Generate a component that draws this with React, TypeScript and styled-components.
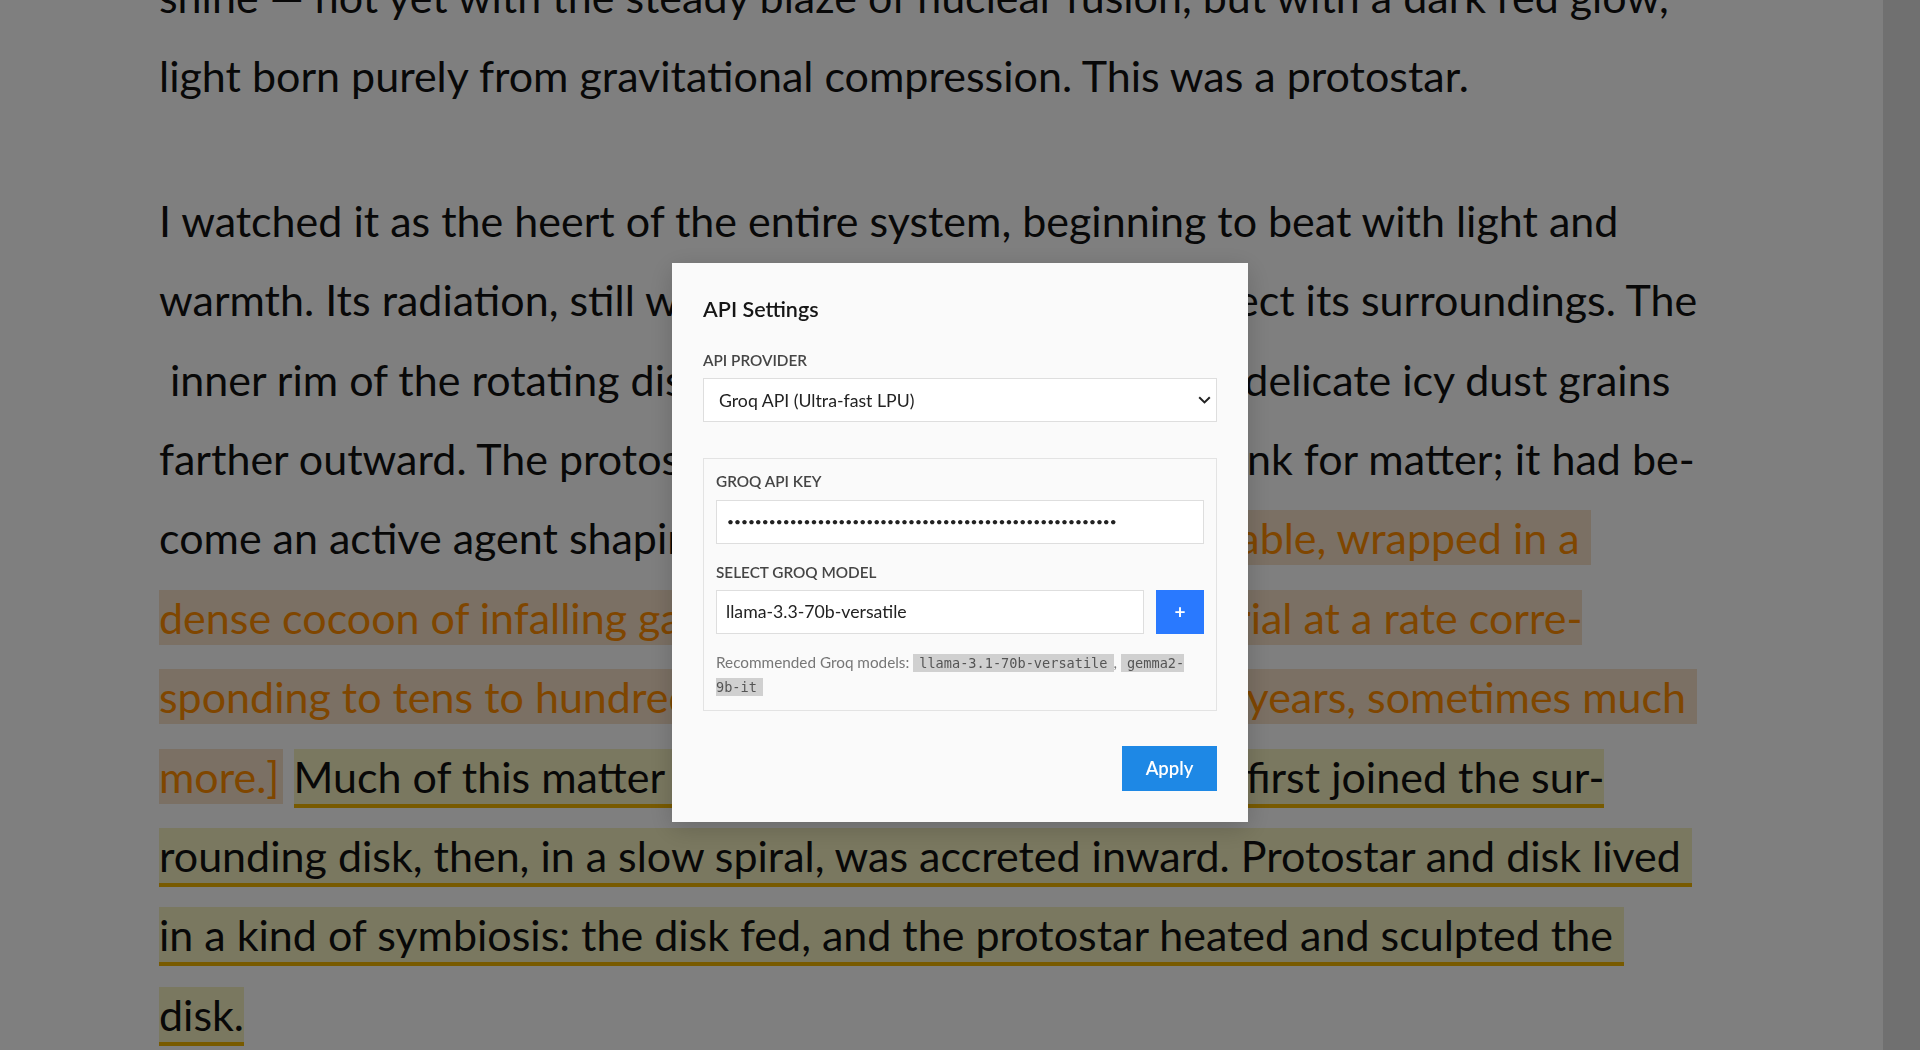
import React from "react";
import styled, { createGlobalStyle } from "styled-components";

const GlobalStyle = createGlobalStyle`
  html, body {
    margin: 0;
    height: 100%;
    overflow: hidden;
    background: #fff;
    font-family: Lato, "Noto Sans", sans-serif;
  }
  * { box-sizing: border-box; }
`;

const Page = styled.div`
  display: flex;
  height: 100vh;
  background: #fff;
`;

const Reader = styled.main`
  flex: 1;
  overflow: hidden;
`;

const Rail = styled.aside`
  width: 37px;
  flex-shrink: 0;
  background: #e0e0e0;
`;

const Article = styled.article`
  margin-top: -43px;
  padding-left: 159px;
`;

const Paragraph = styled.p`
  margin: 0 0 65px;
  white-space: pre;
  font-family: Lato, sans-serif;
  font-size: 43px;
  line-height: 79.4px;
  color: #111;
`;

const Note = styled.span`
  color: #ff8c00;
  background: #f6e0c8;
  padding: 2px 3px;
`;

const Marked = styled.span`
  background: #f4f0c0;
  padding: 2px 0;
  border-bottom: 4px solid #f0b400;
`;

const Overlay = styled.div`
  position: fixed;
  inset: 0;
  background: rgba(0, 0, 0, 0.5);
  display: flex;
  justify-content: center;
  align-items: center;
  padding-top: 35px;
`;

const Dialog = styled.div`
  width: 576px;
  background: #fafafa;
  padding: 34px 31px 31px;
  box-shadow: 0 6px 24px rgba(0, 0, 0, 0.18);
`;

const Title = styled.h2`
  margin: 0 0 28px;
  font-size: 21.5px;
  font-weight: 600;
  line-height: 1.2;
  color: #161616;
`;

const Label = styled.label<{ $gap?: number }>`
  display: block;
  margin: ${(p) => p.$gap ?? 0}px 0 9px;
  font-size: 15.3px;
  font-weight: 600;
  line-height: 1.2;
  color: #454545;
  text-transform: uppercase;
`;

const SelectWrap = styled.div`
  position: relative;
`;

const Select = styled.select`
  appearance: none;
  width: 100%;
  height: 44px;
  padding: 0 15px;
  border: 1px solid #dedede;
  border-radius: 0;
  background: #fff;
  font-family: Lato, sans-serif;
  font-size: 17.7px;
  color: #222;
`;

const Chevron = styled.svg`
  position: absolute;
  right: 6px;
  top: 18px;
  pointer-events: none;
`;

const Group = styled.div`
  margin-top: 36px;
  padding: 13px 12px 11px;
  border: 1px solid #e3e3e3;
`;

const TextInput = styled.input<{ $pad?: number; $size?: number }>`
  width: 100%;
  height: 44px;
  padding: 0 ${(p) => p.$pad ?? 10}px;
  border: 1px solid #dedede;
  border-radius: 0;
  background: #fff;
  font-family: Lato, sans-serif;
  font-size: ${(p) => p.$size ?? 17.7}px;
  color: #222;
  outline: none;
`;

const ModelRow = styled.div`
  display: flex;
  gap: 12px;
`;

const AddButton = styled.button`
  width: 48px;
  height: 44px;
  flex-shrink: 0;
  border: none;
  background: #2979ff;
  color: #fff;
  font-family: Lato, sans-serif;
  font-size: 19px;
  font-weight: 700;
  cursor: pointer;
`;

const Hint = styled.p`
  margin: 17px 0 0;
  font-size: 15.3px;
  line-height: 23px;
  color: #777;
`;

const Code = styled.code`
  padding: 1px 6px;
  background: #d0d0d0;
  color: #555;
  font-family: "DejaVu Sans Mono", monospace;
  font-size: 13.6px;
`;

const Footer = styled.div`
  display: flex;
  justify-content: flex-end;
  margin-top: 35px;
`;

const ApplyButton = styled.button`
  width: 95px;
  height: 45px;
  border: none;
  background: #1e88e5;
  color: #fff;
  font-family: Lato, sans-serif;
  font-size: 18.5px;
  font-weight: 600;
  cursor: pointer;
`;

const apiKey = "gsk_" + "x".repeat(52);

const App = () => {
  return (
    <>
      <GlobalStyle />
      <Page>
        <Reader>
          <Article lang="en">
            <Paragraph>
              {"shine — not yet with the steady blaze of nuclear fusion, but with a dark red glow,\n" +
                "light born purely from gravitational compression. This was a protostar."}
            </Paragraph>
            <Paragraph>
              {"I watched it as the heert of the entire system, beginning to beat with light and\n" +
                "warmth. Its radiation, still weak, had already started to affect its surroundings. The\n" +
                " inner rim of the rotating disk heated up, evaporating the  delicate icy dust grains\n" +
                "farther outward. The protostar was no longer a dormant sink for matter; it had be-\n" +
                "come an active agent shaping its own environment. "}
              <Note>
                {"[Unstable, wrapped in a \n" +
                  "dense cocoon of infalling gas and dust, it swallowed material at a rate corre-\n" +
                  "sponding to tens to hundreds of Earth masses, per million years, sometimes much \n" +
                  "more.]"}
              </Note>{" "}
              <Marked>
                {"Much of this matter did not fall into the star, but it first joined the sur-\n" +
                  "rounding disk, then, in a slow spiral, was accreted inward. Protostar and disk lived \n" +
                  "in a kind of symbiosis: the disk fed, and the protostar heated and sculpted the \n" +
                  "disk."}
              </Marked>
            </Paragraph>
          </Article>
        </Reader>
        <Rail />
      </Page>

      <Overlay>
        <Dialog role="dialog" aria-label="API Settings">
          <Title>API Settings</Title>

          <Label htmlFor="provider">API Provider</Label>
          <SelectWrap>
            <Select id="provider" defaultValue="groq">
              <option value="groq">Groq API (Ultra-fast LPU)</option>
              <option value="openai">OpenAI API</option>
            </Select>
            <Chevron width="13" height="8" viewBox="0 0 13 8">
              <path d="M1.2 1.2 L6.5 6.4 L11.8 1.2" fill="none" stroke="#222" strokeWidth="2" />
            </Chevron>
          </SelectWrap>

          <Group>
            <Label htmlFor="key">Groq API Key</Label>
            <TextInput id="key" type="password" $size={12} defaultValue={apiKey} />

            <Label htmlFor="model" $gap={19}>
              Select Groq Model
            </Label>
            <ModelRow>
              <TextInput id="model" $pad={9} defaultValue="llama-3.3-70b-versatile" />
              <AddButton>+</AddButton>
            </ModelRow>

            <Hint>
              Recommended Groq models: <Code>llama-3.1-70b-versatile</Code>,{" "}
              <Code>
                gemma2-<wbr />9b-it
              </Code>
            </Hint>
          </Group>

          <Footer>
            <ApplyButton>Apply</ApplyButton>
          </Footer>
        </Dialog>
      </Overlay>
    </>
  );
};

export default App;
